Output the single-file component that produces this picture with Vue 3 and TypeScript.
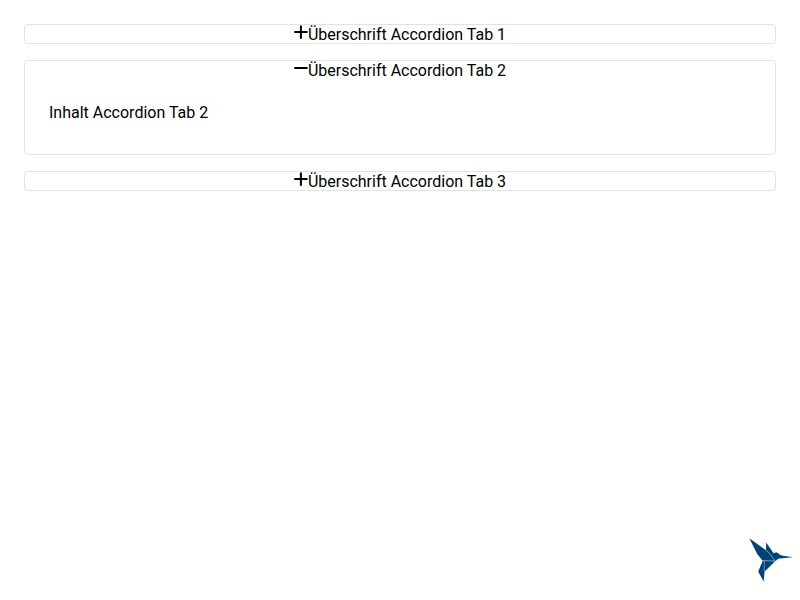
<script setup lang="ts">
import { ref } from 'vue'

interface Tab { title: string; content: string }
const tabs: Tab[] = [1, 2, 3].map((n) => ({
  title: `Überschrift Accordion Tab ${n}`,
  content: `Inhalt Accordion Tab ${n}`,
}))
const open = ref(1)
const toggle = (i: number) => { open.value = open.value === i ? -1 : i }
</script>

<template>
  <main class="accordion">
    <section v-for="(tab, i) in tabs" :key="i" class="tab">
      <button class="header" :aria-expanded="open === i" @click="toggle(i)">
        <svg class="icon" viewBox="0 0 14 14" aria-hidden="true">
          <path v-if="open === i" d="M1 7.1H12.8" />
          <path v-else d="M1 7.1H12.8M6.9 1.2V13" />
        </svg>
        <span>{{ tab.title }}</span>
      </button>
      <div v-if="open === i" class="content">{{ tab.content }}</div>
    </section>
  </main>
  <svg class="logo" viewBox="0 0 44 44" aria-hidden="true">
    <path class="shape" d="M.3.2 20.2 14.6 26.4 22.8H13.6L8.2 16z" />
    <path class="shape" d="M17.2 4.4 24.8 15.4 20.8 16 17 12.8z" />
    <path class="shape" d="M20 15 24.4 15.2 27.4 14.2 30.8 16.6 33.4 18.4 32 20 29 21 25.8 23.4 14 22.6z" />
    <path class="shape" d="M31 17.2 43.8 19.2 31 20.6z" />
    <path class="shape" d="M13.8 22.8 26.2 23.2 15.6 33.4 14.6 43.6 9.2 33.6z" />
    <path class="fold" d="M20.2 14.8 25.8 22.8M13.6 22.5 26.2 23M15.2 23V33.2M20.2 14.9 16.8 12.2" />
  </svg>
</template>

<style>
body { background: #fff; }
</style>

<style scoped>
.accordion {
  display: flex;
  flex-direction: column;
  gap: 16px;
  padding: 24px;
  font: 16px/normal Roboto, sans-serif;
  color: #000;
}
.tab { border: 1px solid #e2e2e2; border-radius: 4px; }
.header {
  display: flex;
  justify-content: center;
  width: 100%;
  height: 18px;
  padding: 0;
  border: 0;
  background: none;
  font: inherit;
  color: inherit;
}
.icon {
  width: 14px;
  height: 14px;
  fill: none;
  stroke: currentColor;
  stroke-width: 2;
  stroke-linecap: round;
}
.content { height: 27px; padding: 24px; }
.logo { position: fixed; right: 7px; bottom: 18px; width: 44px; height: 44px; }
.shape { fill: #004378; }
.fold { fill: none; stroke: #fff; stroke-width: 0.45; }
</style>
